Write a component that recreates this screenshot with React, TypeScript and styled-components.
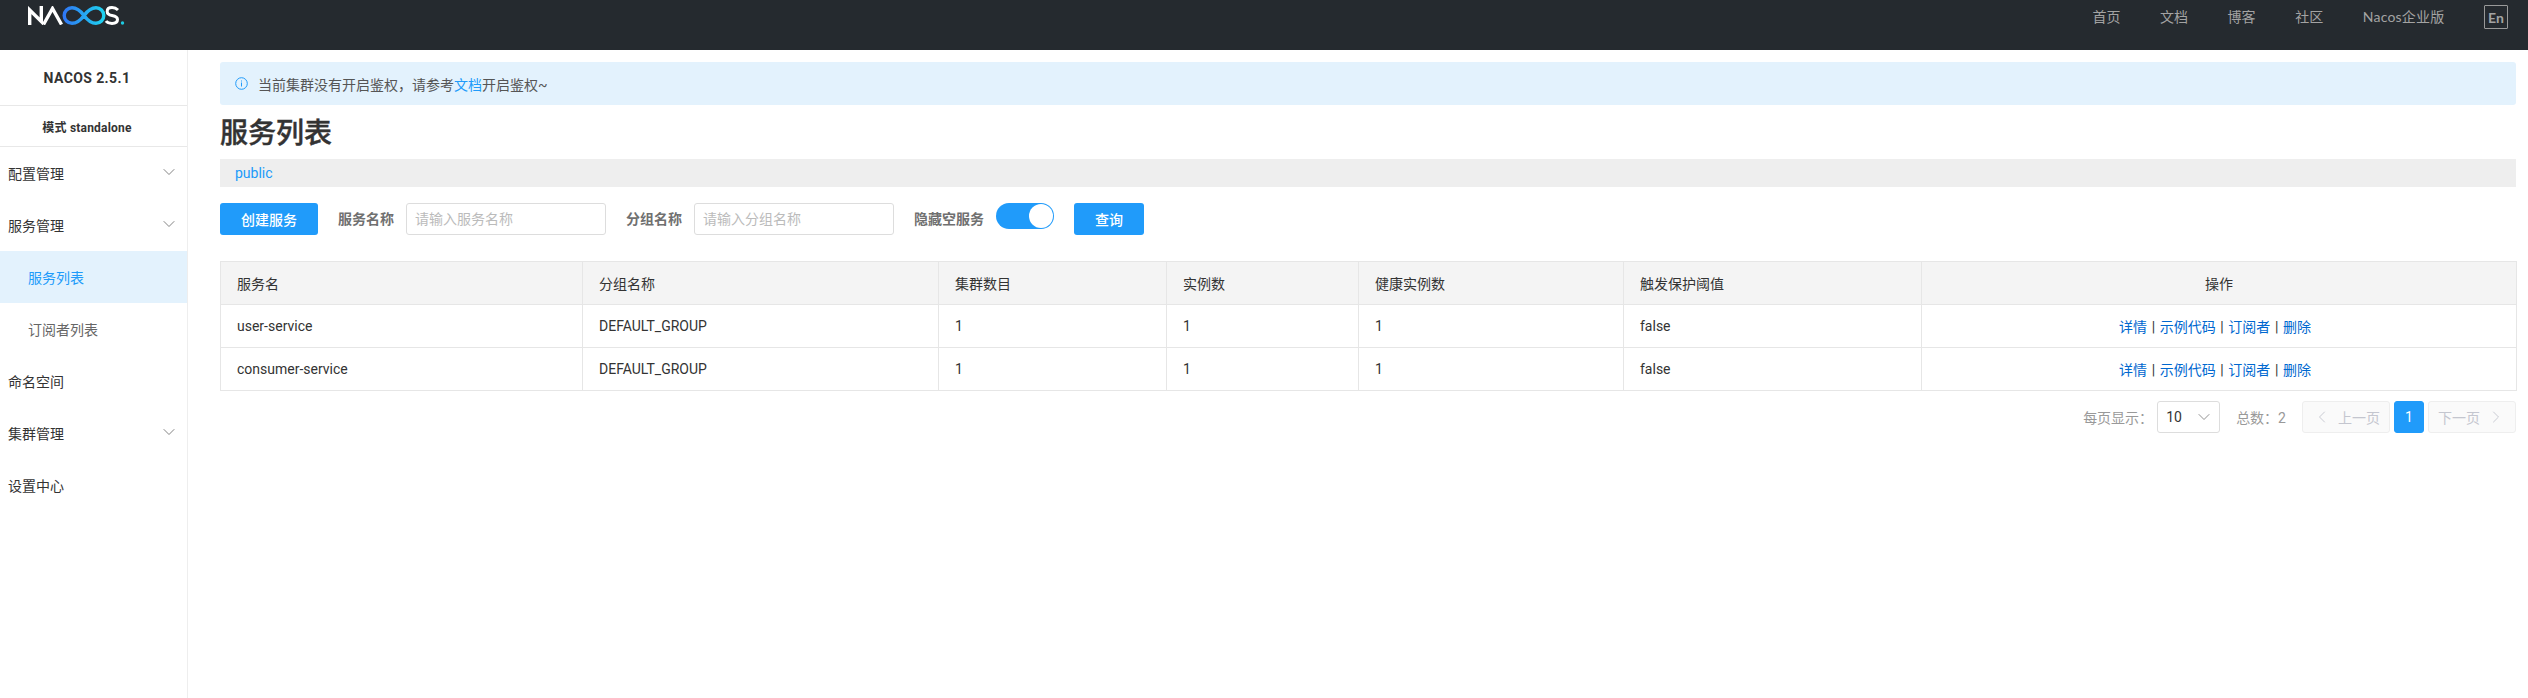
import React from 'react'
import styled, { createGlobalStyle } from 'styled-components'
import { ChevronDown, ChevronLeft, ChevronRight } from 'lucide-react'

const GlobalStyle = createGlobalStyle`
	html, body {
		margin: 0;
		padding: 0;
		background: #fff;
		font-family: Roboto, 'Noto Sans CJK SC', sans-serif;
		font-size: 14px;
		color: #333;
	}
	* {
		box-sizing: border-box;
	}
`

const Page = styled.div`
	width: 2528px;
	height: 698px;
	overflow: hidden;
	display: flex;
	flex-direction: column;
`

const Header = styled.header`
	height: 50px;
	flex: none;
	background: #252a2f;
	display: flex;
	justify-content: space-between;
	align-items: flex-start;
	padding: 6px 20px 0 28px;
`

const Nav = styled.nav`
	display: flex;
	align-items: center;
	height: 20px;
	font-family: Lato, 'Noto Sans CJK SC', sans-serif;
	font-size: 14px;
	color: #a3a3a3;
	gap: 39.6px;
`

const NavLink = styled.span<{ $wide?: boolean }>`
	letter-spacing: ${(p) => (p.$wide ? '0.2px' : '0')};
`

const LangButton = styled.span`
	width: 24px;
	height: 24px;
	margin-top: 2px;
	border: 1px solid #999;
	border-radius: 1px;
	display: flex;
	align-items: center;
	justify-content: center;
	font-weight: 700;
	color: #a3a3a3;
`

const Body = styled.div`
	flex: 1;
	display: flex;
`

const Sidebar = styled.aside`
	width: 188px;
	flex: none;
	border-right: 1px solid #eee;
`

const SideHead = styled.div<{ $small?: boolean; $h: number }>`
	height: ${(p) => p.$h}px;
	padding-right: 13px;
	border-bottom: 1px solid #e8e8e8;
	display: flex;
	align-items: center;
	justify-content: center;
	font-weight: 700;
	font-size: ${(p) => (p.$small ? 12 : 14)}px;
	letter-spacing: ${(p) => (p.$small ? 0.2 : 0.4)}px;
	color: #333;
`

const MenuItem = styled.div<{ $sub?: boolean; $active?: boolean }>`
	height: 52px;
	display: flex;
	align-items: center;
	justify-content: space-between;
	padding: 0 8px 0 ${(p) => (p.$sub ? 28 : 8)}px;
	background: ${(p) => (p.$active ? '#e3f2fd' : 'transparent')};
	color: ${(p) => (p.$active ? '#209bfa' : p.$sub ? '#666' : '#333')};
	svg {
		color: #777;
		margin-top: -2px;
	}
`

const Main = styled.main`
	flex: 1;
	min-width: 0;
	padding: 12px 12px 0 32px;
`

const Alert = styled.div`
	height: 43px;
	background: #e3f2fd;
	border-radius: 3px;
	padding: 0 15px;
	display: flex;
	align-items: center;
	gap: 10px;
	color: #555;
	a {
		color: #209bfa;
		text-decoration: none;
	}
`

const Title = styled.h1`
	margin: 9px 0 6px;
	height: 39px;
	line-height: 39px;
	font-size: 28px;
	font-weight: 500;
	-webkit-text-stroke: 0.4px #333;
	color: #333;
`

const NamespaceBar = styled.div`
	height: 28px;
	background: #eee;
	padding: 0 15px;
	display: flex;
	align-items: center;
	color: #209bfa;
`

const Toolbar = styled.div`
	margin-top: 16px;
	display: flex;
	align-items: flex-start;
`

const Button = styled.button<{ $w: number; $mr: number }>`
	width: ${(p) => p.$w}px;
	height: 32px;
	margin-right: ${(p) => p.$mr}px;
	border: 0;
	border-radius: 3px;
	background: #209bfa;
	color: #fff;
	font: inherit;
	font-weight: 500;
	padding: 0;
`

const FieldLabel = styled.label`
	height: 32px;
	line-height: 32px;
	margin-right: 12px;
	color: #707070;
	font-weight: 700;
`

const SearchInput = styled.input`
	width: 200px;
	height: 32px;
	border: 1px solid #ddd;
	border-radius: 3px;
	padding: 0 8px;
	margin-right: 20px;
	font: inherit;
	&::placeholder {
		color: #bbb;
	}
`

const Switch = styled.span`
	width: 58px;
	height: 26px;
	margin-right: 20px;
	border-radius: 13px;
	background: #209bfa;
	display: flex;
	justify-content: flex-end;
	align-items: center;
	padding-right: 1px;
	&::after {
		content: '';
		width: 24px;
		height: 24px;
		border-radius: 50%;
		background: #fff;
	}
`

const Table = styled.table`
	margin-top: 26px;
	width: 2296px;
	table-layout: fixed;
	border-collapse: collapse;
	th, td {
		height: 43px;
		padding: 0 16px;
		border: 1px solid #e6e6e6;
		font-weight: 400;
		text-align: left;
		color: #333;
	}
	th {
		background: #f4f4f4;
	}
	th.center {
		text-align: center;
	}
	td.actions {
		text-align: center;
		padding-right: 24px;
	}
`

const ActionLink = styled.a`
	color: #0068d0;
	text-decoration: none;
`

const ActionSep = styled.span`
	margin: 0 4.6px;
	color: #333;
`

const Pager = styled.div`
	margin-top: 10px;
	display: flex;
	justify-content: flex-end;
	align-items: center;
	color: #999;
`

const PagerText = styled.span<{ $mr: number }>`
	margin-right: ${(p) => p.$mr}px;
`

const PageSize = styled.div`
	width: 63px;
	height: 32px;
	margin-right: 16px;
	padding: 0 5px 0 8px;
	border: 1px solid #ddd;
	border-radius: 3px;
	display: flex;
	align-items: center;
	justify-content: space-between;
	color: #333;
	svg {
		color: #888;
	}
`

const PageButton = styled.span<{ $current?: boolean; $w: number }>`
	width: ${(p) => p.$w}px;
	height: 32px;
	margin-left: 4px;
	border-radius: 3px;
	display: flex;
	align-items: center;
	justify-content: center;
	gap: 6px;
	border: 1px solid ${(p) => (p.$current ? '#209bfa' : '#eee')};
	background: ${(p) => (p.$current ? '#209bfa' : '#fafafa')};
	color: ${(p) => (p.$current ? '#fff' : '#c4c6cf')};
`

const columns = [362, 356, 228, 192, 265, 298, 595]
const rows = ['user-service', 'consumer-service']

function Logo() {
	return (
		<svg width='97' height='19' viewBox='0 0 97 19' fill='none'>
			<defs>
				<linearGradient id='loop' x1='36' y1='0' x2='76' y2='0' gradientUnits='userSpaceOnUse'>
					<stop offset='0' stopColor='#2f78f5' />
					<stop offset='1' stopColor='#1ed3f0' />
				</linearGradient>
			</defs>
			<path d='M1.7 19V4L13.3 15.5V0' stroke='#fff' strokeWidth='3.4' />
			<path d='M15.5 18.5L24.5 2.5L33.5 18.5' stroke='#fff' strokeWidth='3.4' />
			<path
				d='M56 9.5C52 4 49 1.7 44 1.7A7.8 7.8 0 0 0 44 17.3C49 17.3 52 15 56 9.5C60 4 63 1.7 68 1.7A7.8 7.8 0 0 1 68 17.3C63 17.3 60 15 56 9.5'
				stroke='url(#loop)'
				strokeWidth='3.4'
			/>
			<path
				d='M90 4C88 2 86 1.6 84 1.6C81 1.6 79.2 3 79.2 5.5C79.2 8 81 9 84 9.5C87 10 89.5 11 89.5 13.5C89.5 16.5 87 17.4 84 17.4C81 17.4 79 16.5 78 15'
				stroke='#fff'
				strokeWidth='3'
			/>
			<circle cx='94.5' cy='17' r='1.7' fill='#1dc9e0' />
		</svg>
	)
}

function InfoIcon() {
	return (
		<svg width='13' height='13' viewBox='0 0 13 13' fill='none'>
			<circle cx='6.5' cy='6.5' r='5.8' stroke='#209bfa' strokeWidth='1' />
			<path d='M6.5 5.5V9.5M6.5 3.5V4.5' stroke='#209bfa' strokeWidth='1' />
		</svg>
	)
}

export default function App() {
	return (
		<Page>
			<GlobalStyle />
			<Header>
				<Logo />
				<Nav>
					<NavLink>首页</NavLink>
					<NavLink>文档</NavLink>
					<NavLink>博客</NavLink>
					<NavLink>社区</NavLink>
					<NavLink $wide>Nacos企业版</NavLink>
					<LangButton>En</LangButton>
				</Nav>
			</Header>
			<Body>
				<Sidebar>
					<SideHead $h={56}>NACOS 2.5.1</SideHead>
					<SideHead $h={41} $small>
						模式 standalone
					</SideHead>
					<MenuItem>
						配置管理
						<ChevronDown size={20} strokeWidth={1.1} />
					</MenuItem>
					<MenuItem>
						服务管理
						<ChevronDown size={20} strokeWidth={1.1} />
					</MenuItem>
					<MenuItem $sub $active>
						服务列表
					</MenuItem>
					<MenuItem $sub>订阅者列表</MenuItem>
					<MenuItem>命名空间</MenuItem>
					<MenuItem>
						集群管理
						<ChevronDown size={20} strokeWidth={1.1} />
					</MenuItem>
					<MenuItem>设置中心</MenuItem>
				</Sidebar>
				<Main>
					<Alert>
						<InfoIcon />
						<span>
							当前集群没有开启鉴权，请参考<a href='#'>文档</a>开启鉴权~
						</span>
					</Alert>
					<Title>服务列表</Title>
					<NamespaceBar>public</NamespaceBar>
					<Toolbar>
						<Button $w={98} $mr={20}>
							创建服务
						</Button>
						<FieldLabel>服务名称</FieldLabel>
						<SearchInput placeholder='请输入服务名称' />
						<FieldLabel>分组名称</FieldLabel>
						<SearchInput placeholder='请输入分组名称' />
						<FieldLabel>隐藏空服务</FieldLabel>
						<Switch />
						<Button $w={70} $mr={0}>
							查询
						</Button>
					</Toolbar>
					<Table>
						<colgroup>
							{columns.map((w, i) => (
								<col key={i} width={w} />
							))}
						</colgroup>
						<thead>
							<tr>
								<th>服务名</th>
								<th>分组名称</th>
								<th>集群数目</th>
								<th>实例数</th>
								<th>健康实例数</th>
								<th>触发保护阈值</th>
								<th className='center'>操作</th>
							</tr>
						</thead>
						<tbody>
							{rows.map((name) => (
								<tr key={name}>
									<td>{name}</td>
									<td>DEFAULT_GROUP</td>
									<td>1</td>
									<td>1</td>
									<td>1</td>
									<td>false</td>
									<td className='actions'>
										<ActionLink>详情</ActionLink>
										<ActionSep>|</ActionSep>
										<ActionLink>示例代码</ActionLink>
										<ActionSep>|</ActionSep>
										<ActionLink>订阅者</ActionLink>
										<ActionSep>|</ActionSep>
										<ActionLink>删除</ActionLink>
									</td>
								</tr>
							))}
						</tbody>
					</Table>
					<Pager>
						<PagerText $mr={4}>每页显示：</PagerText>
						<PageSize>
							10
							<ChevronDown size={20} strokeWidth={1.1} />
						</PageSize>
						<PagerText $mr={12}>总数：2</PagerText>
						<PageButton $w={88}>
							<ChevronLeft size={20} strokeWidth={1.1} />
							上一页
						</PageButton>
						<PageButton $w={30} $current>
							1
						</PageButton>
						<PageButton $w={88}>
							下一页
							<ChevronRight size={20} strokeWidth={1.1} />
						</PageButton>
					</Pager>
				</Main>
			</Body>
		</Page>
	)
}
